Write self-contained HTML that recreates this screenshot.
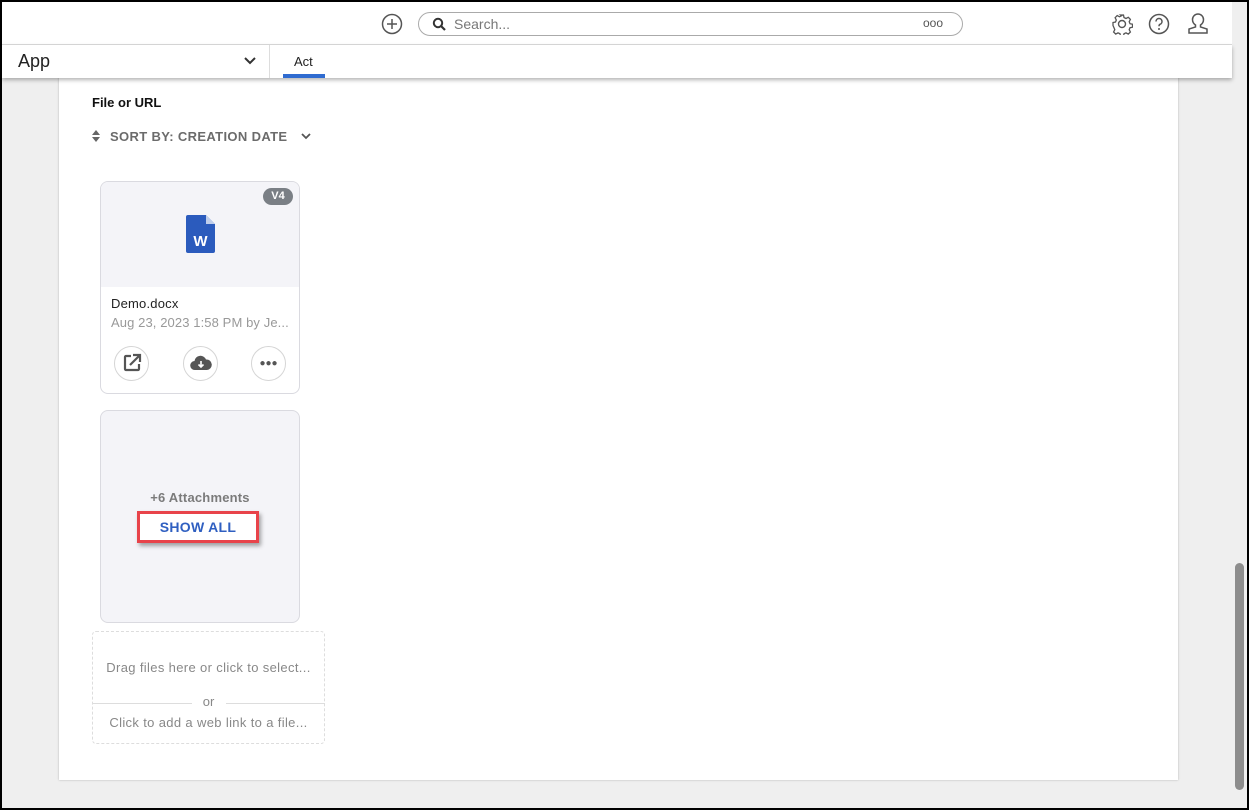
<!DOCTYPE html>
<html><head><style>
*{box-sizing:border-box;margin:0;padding:0}
body{width:1249px;height:810px;overflow:hidden;background:#000;font-family:"Liberation Sans",sans-serif;position:relative}
.frame{position:absolute;left:2px;top:2px;width:1245px;height:806px;background:#efefef;overflow:hidden}
.top{position:absolute;left:0;top:0;width:1230px;height:43px;background:#fff;border-bottom:1px solid #dcdcdc}
.sub{position:absolute;left:0;top:43px;width:1230px;height:33px;background:#fff;box-shadow:0 2px 4px rgba(0,0,0,.3);z-index:2}
.card{position:absolute;left:57px;top:70px;width:1119px;height:708px;background:#fff;box-shadow:0 0 2px rgba(0,0,0,.25)}
.sb{position:absolute;left:1230px;top:0;width:15px;height:806px;background:#efefef}
.thumb{position:absolute;left:3px;top:561px;width:9px;height:227px;background:#8d8d8d;border-radius:5px}
.t{position:absolute;white-space:nowrap}
</style></head><body><div class="frame">
<div class="top">
<svg class="t" style="left:379px;top:11px" width="22" height="22" viewBox="0 0 22 22"><circle cx="11" cy="11" r="9.5" fill="none" stroke="#555" stroke-width="1.5"/><path d="M11 6v10M6 11h10" stroke="#555" stroke-width="1.5"/></svg>
<div class="t" style="left:416px;top:10px;width:545px;height:24px;border:1px solid #aaa;border-radius:12px"></div>
<svg class="t" style="left:430px;top:15px" width="14" height="14" viewBox="0 0 14 14"><circle cx="6" cy="6" r="4.2" fill="none" stroke="#333" stroke-width="2"/><path d="M9 9l4 4" stroke="#333" stroke-width="2.2"/></svg>
<div class="t" style="left:452px;top:14px;font-size:14px;color:#777">Search...</div>
<div class="t" style="left:921px;top:14px;font-size:12px;color:#555;letter-spacing:0">ooo</div>
<svg class="t" style="left:1109px;top:11px" width="22" height="22" viewBox="0 0 22 22"><circle cx="11" cy="11" r="3.5" fill="none" stroke="#555" stroke-width="1.4"/><path d="M9.5 2h3l.5 2.5 2 1 2.3-1.2 2.1 2.1-1.2 2.3.8 2 2.5.5v3l-2.5.5-.8 2 1.2 2.3-2.1 2.1-2.3-1.2-2 .8-.5 2.6h-3l-.5-2.6-2-.8-2.3 1.2-2.1-2.1 1.2-2.3-.8-2L2 12.5v-3l2.5-.5.8-2-1.2-2.3 2.1-2.1 2.3 1.2 2-1z" fill="none" stroke="#555" stroke-width="1.3"/></svg>
<svg class="t" style="left:1146px;top:11px" width="22" height="22" viewBox="0 0 22 22"><circle cx="11" cy="11" r="9.5" fill="none" stroke="#555" stroke-width="1.5"/><path d="M8 8.5a3 3 0 1 1 4 2.8c-.8.4-1 1-1 2" fill="none" stroke="#555" stroke-width="1.5"/><circle cx="11" cy="16" r="1" fill="#555"/></svg>
<svg class="t" style="left:1184px;top:10px" width="24" height="24" viewBox="0 0 24 24"><path d="M12 2a5.5 5.5 0 0 0-5.5 5.5c0 2.5 1.5 4.5 3 5.5v2L3 17v4h18v-4l-6.5-2v-2c1.5-1 3-3 3-5.5A5.5 5.5 0 0 0 12 2z" fill="none" stroke="#555" stroke-width="1.5"/></svg>
</div>
<div class="sub">
<div class="t" style="left:16px;top:6px;font-size:18px;color:#222">App</div>
<svg class="t" style="left:242px;top:12px" width="12" height="8" viewBox="0 0 12 8"><path d="M1 1l5 5 5-5" fill="none" stroke="#333" stroke-width="2"/></svg>
<div class="t" style="left:267px;top:0;width:1px;height:33px;background:#ddd"></div>
<div class="t" style="left:292px;top:9px;font-size:13px;color:#222">Act</div>
<div class="t" style="left:281px;top:29px;width:42px;height:4px;background:#2f6bd0"></div>
</div>
<div class="card">
<div class="t" style="left:33px;top:23px;font-size:13px;font-weight:bold;color:#111">File or URL</div>
<svg class="t" style="left:33px;top:58px" width="8" height="12" viewBox="0 0 8 12"><path d="M0 5l4-5 4 5zM0 7l4 5 4-5z" fill="#666"/></svg>
<div class="t" style="left:51px;top:57px;font-size:13px;font-weight:bold;color:#6b6b6b;letter-spacing:0.35px">SORT BY: CREATION DATE</div>
<svg class="t" style="left:242px;top:61px" width="10" height="7" viewBox="0 0 10 7"><path d="M1 1l4 4 4-4" fill="none" stroke="#555" stroke-width="1.8"/></svg>
<div class="t" style="left:41px;top:109px;width:200px;height:213px;border:1px solid #dadae0;border-radius:8px;overflow:hidden">
<div style="height:105px;background:#f4f4f8;position:relative">
<div class="t" style="right:6px;top:6px;width:30px;height:17px;border-radius:9px;background:#7a7f85;color:#fff;font-size:11px;font-weight:bold;text-align:center;line-height:17px">V4</div>
<svg class="t" style="left:85px;top:33px" width="29" height="38" viewBox="0 0 29 38"><path d="M2 0h18l9 9v27a2 2 0 0 1-2 2H2a2 2 0 0 1-2-2V2a2 2 0 0 1 2-2z" fill="#2b5bbd"/><path d="M20 0v9h9z" fill="#fff" opacity=".7"/><text x="14.5" y="31" font-size="15" font-weight="bold" fill="#fff" text-anchor="middle" font-family="Liberation Sans">W</text></svg>
</div>
<div class="t" style="left:10px;top:114px;font-size:13px;color:#222;letter-spacing:0.2px">Demo.docx</div>
<div class="t" style="left:10px;top:133px;font-size:13px;color:#999;letter-spacing:0.1px">Aug 23, 2023 1:58 PM by Je...</div>
<div class="t" style="left:13px;top:164px;width:35px;height:35px;border:1px solid #d5d5d5;border-radius:50%"></div>
<svg class="t" style="left:21px;top:171px" width="20" height="20" viewBox="0 0 20 20"><path d="M9 3H4a1 1 0 0 0-1 1v12a1 1 0 0 0 1 1h12a1 1 0 0 0 1-1v-5" fill="none" stroke="#555" stroke-width="2.2"/><path d="M8 12l9-9M11 2h7v7" fill="none" stroke="#555" stroke-width="2.2"/></svg>
<div class="t" style="left:82px;top:164px;width:35px;height:35px;border:1px solid #d5d5d5;border-radius:50%"></div>
<svg class="t" style="left:89px;top:172px" width="22" height="18" viewBox="0 0 22 18"><path d="M5 16a4.5 4.5 0 0 1-.5-9A6 6 0 0 1 16 5.5a5 5 0 0 1 1 10.5z" fill="#555"/><path d="M11 7v6M8.5 10.5l2.5 2.5 2.5-2.5" fill="none" stroke="#fff" stroke-width="1.6"/></svg>
<div class="t" style="left:150px;top:164px;width:35px;height:35px;border:1px solid #d5d5d5;border-radius:50%;text-align:center;line-height:33px;color:#555;font-size:10px;letter-spacing:0">●●●</div>
</div>
<div class="t" style="left:41px;top:338px;width:200px;height:213px;border:1px solid #dadae0;border-radius:8px;background:#f4f4f8">
<div class="t" style="left:0;width:198px;top:79px;text-align:center;font-size:13px;font-weight:bold;color:#7b7b7b;letter-spacing:0.2px">+6 Attachments</div>
<div class="t" style="left:36px;top:100px;width:122px;height:32px;border:3px solid #e8434a;background:#fff;box-shadow:2px 3px 4px rgba(0,0,0,.35);text-align:center;line-height:26px;font-size:14px;font-weight:bold;color:#2f5fc1;letter-spacing:0.3px">SHOW ALL</div>
</div>
<div class="t" style="left:33px;top:559px;width:233px;height:113px;border:1px dashed #ddd;border-radius:4px">
<div class="t" style="left:0;width:231px;top:28px;text-align:center;font-size:13px;color:#888;letter-spacing:0.35px">Drag files here or click to select...</div>
<div class="t" style="left:0;top:71px;width:99px;height:1px;background:#ddd"></div>
<div class="t" style="left:133px;top:71px;width:99px;height:1px;background:#ddd"></div>
<div class="t" style="left:0;width:231px;top:62px;text-align:center;font-size:13px;color:#888">or</div>
<div class="t" style="left:0;width:231px;top:83px;text-align:center;font-size:13px;color:#888;letter-spacing:0.35px">Click to add a web link to a file...</div>
</div>
</div>
<div class="sb"><div class="thumb"></div></div>
</div></body></html>
